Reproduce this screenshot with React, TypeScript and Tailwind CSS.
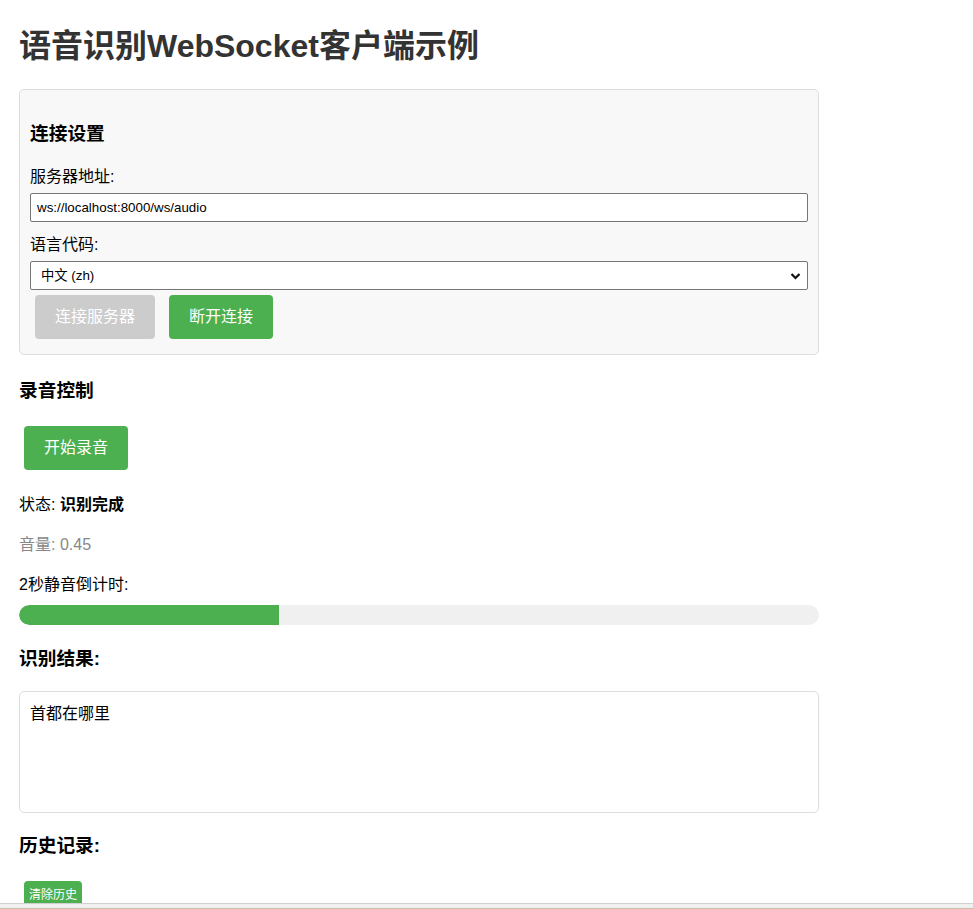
import React from "react";

const font = { fontFamily: '"Liberation Sans", Arial, "Noto Sans CJK SC", sans-serif' };

export default function App() {
  return (
    <div className="min-h-[909px] bg-white text-black" style={font}>
      <div className="pl-[19px] w-[819px] pb-[40px]">
        <h1 className="pt-[28px] text-[32px] leading-[36px] font-bold text-[#333]">语音识别WebSocket客户端示例</h1>

        <div className="mt-[25px] w-[800px] border border-[#ddd] rounded-[5px] bg-[#f8f8f8] px-[10px] pt-[10px] pb-[10px]">
          <h3 className="mt-[22px] text-[18.72px] leading-[24px] font-bold">连接设置</h3>
          <div className="mt-[19px] text-[16px] leading-[24px]">服务器地址:</div>
          <div className="mt-[4px] h-[29px] w-[778px] border border-[#767676] rounded-[2px] bg-white flex items-center pl-[6px] text-[13.33px]">
            ws://localhost:8000/ws/audio
          </div>
          <div className="mt-[11px] text-[16px] leading-[24px]">语言代码:</div>
          <div className="mt-[4px] h-[29px] w-[778px] border border-[#767676] rounded-[2px] bg-white flex items-center pl-[10px] pr-[6px] text-[13.33px]">
            <span className="flex-1">中文 (zh)</span>
            <svg width="11" height="8" viewBox="0 0 11 8">
              <path d="M1.5 2 L5.5 6 L9.5 2" fill="none" stroke="#111" strokeWidth="2.2" />
            </svg>
          </div>
          <div className="mt-[5px] mb-[5px] flex gap-[14px] pl-[5px]">
            <div className="h-[44px] w-[120px] rounded-[4px] bg-[#cccccc] text-white text-[16px] flex items-center justify-center">连接服务器</div>
            <div className="h-[44px] w-[104px] rounded-[4px] bg-[#4caf50] text-white text-[16px] flex items-center justify-center">断开连接</div>
          </div>
        </div>

        <h3 className="mt-[24px] text-[18.72px] leading-[24px] font-bold">录音控制</h3>
        <div className="mt-[23px] ml-[5px] h-[44px] w-[104px] rounded-[4px] bg-[#4caf50] text-white text-[16px] flex items-center justify-center">开始录音</div>

        <div className="mt-[23px] text-[16px] leading-[24px]">
          状态: <span className="font-bold">识别完成</span>
        </div>
        <div className="mt-[16px] text-[16px] leading-[24px] text-[#888]">音量: 0.45</div>
        <div className="mt-[16px] text-[16px] leading-[24px]">2秒静音倒计时:</div>
        <div className="mt-[8px] h-[20px] w-[800px] rounded-[10px] bg-[#f0f0f0] overflow-hidden">
          <div className="h-full bg-[#4caf50] rounded-l-[10px]" style={{ width: "32.5%" }} />
        </div>

        <h3 className="mt-[22px] text-[18.72px] leading-[24px] font-bold">识别结果:</h3>
        <div className="mt-[20px] h-[122px] w-[800px] border border-[#ddd] rounded-[5px] p-[10px] text-[16px] leading-[24px]">首都在哪里</div>

        <h3 className="mt-[21px] text-[18.72px] leading-[24px] font-bold">历史记录:</h3>
        <div className="mt-[23px] ml-[5px] h-[28px] w-[58px] rounded-[4px] bg-[#4caf50] text-white text-[12px] flex items-center justify-center">清除历史</div>
      </div>
      <div className="fixed left-0 right-0 bottom-0 h-[6px] border-t border-[#d0d0d0] bg-[#f0f0f0] border-b border-b-[#c8bfa8]" />
    </div>
  );
}
